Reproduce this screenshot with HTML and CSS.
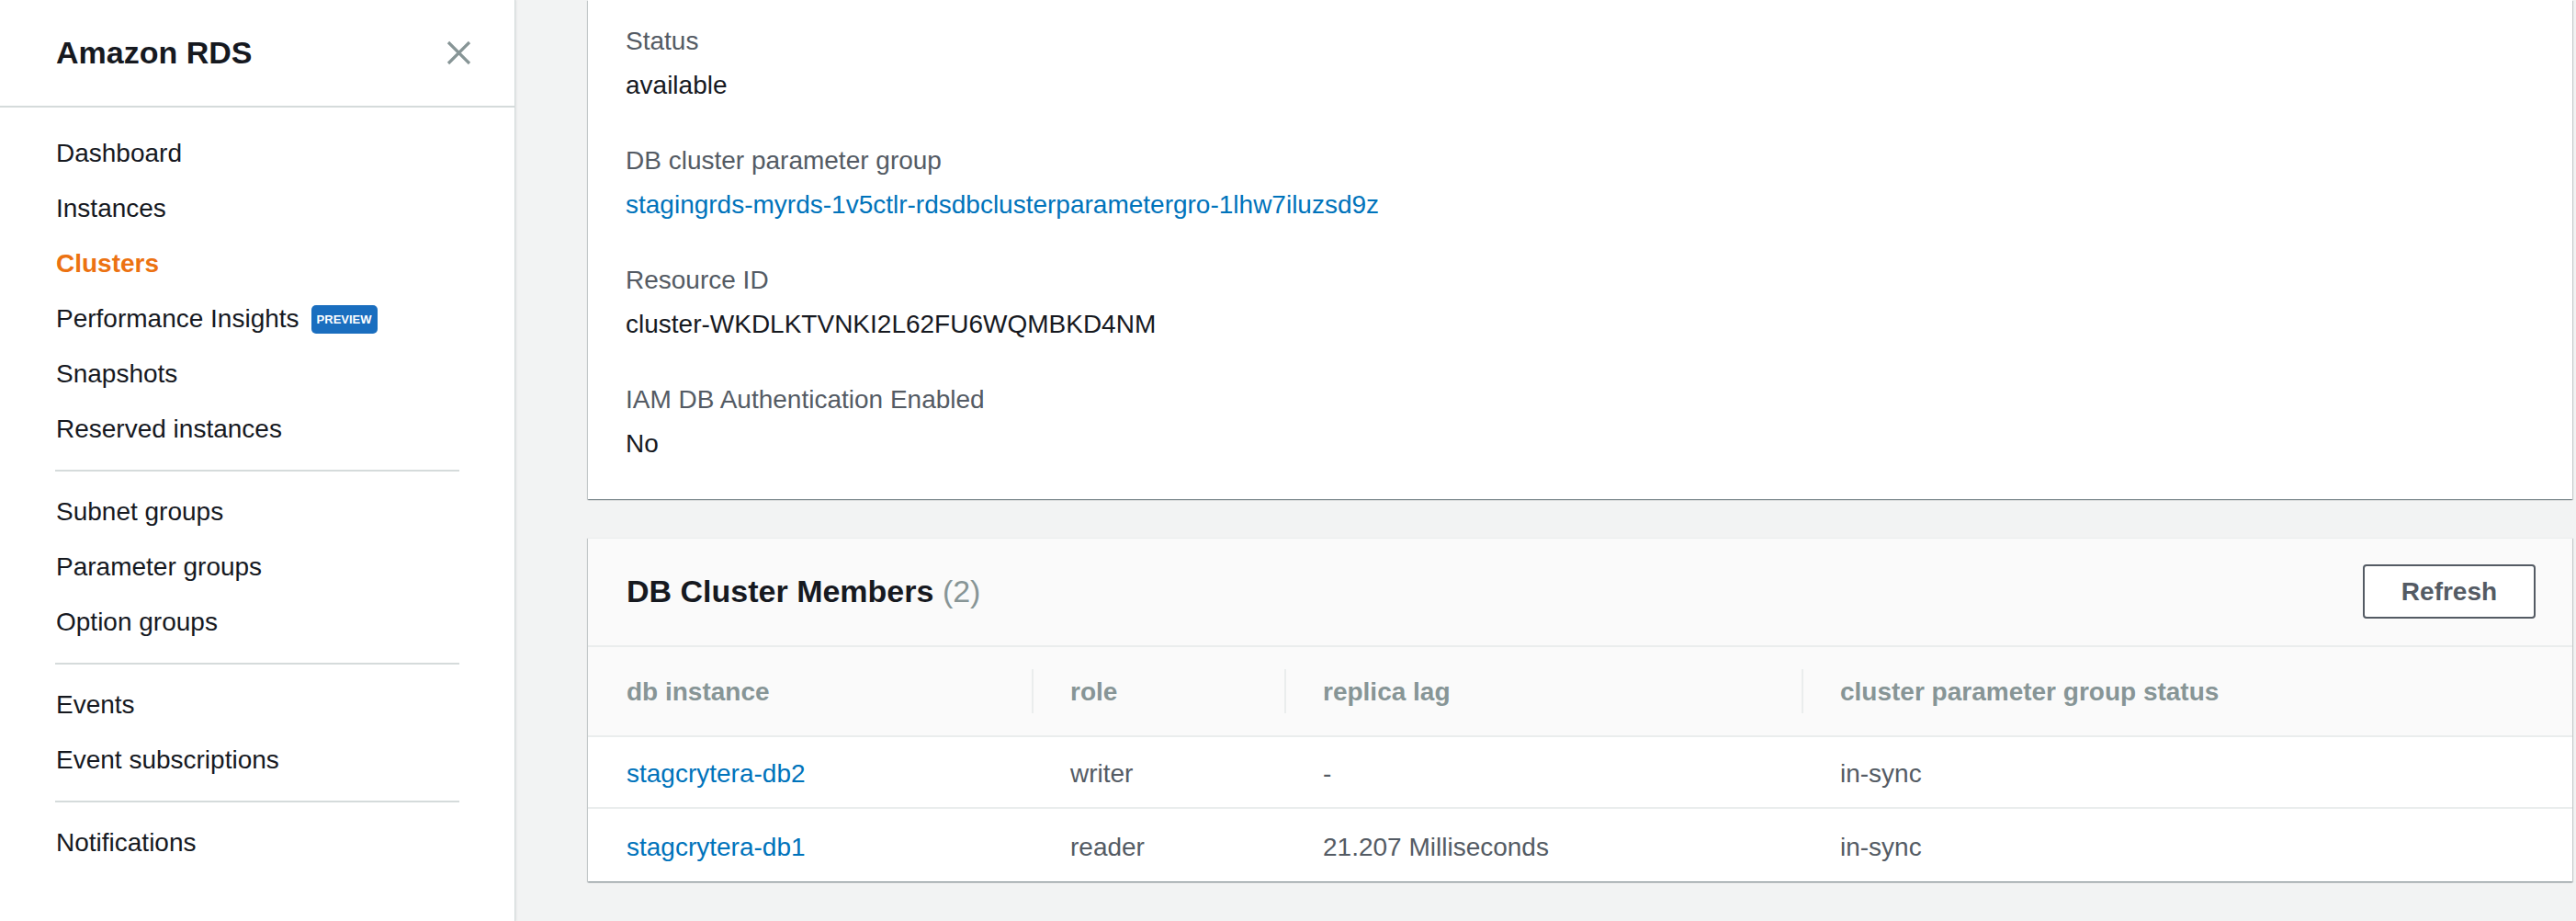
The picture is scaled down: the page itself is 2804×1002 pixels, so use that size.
FILE: index.html
```html
<!DOCTYPE html>
<html lang="en">
<head>
<meta charset="utf-8">
<title>Amazon RDS - Cluster</title>
<link rel="stylesheet" href="styles.css">
</head>
<body>
<aside class="sidebar">
  <div class="side-header">
    <span class="side-title">Amazon RDS</span>
    <svg class="close-icon" width="27" height="27" viewBox="0 0 27 27" aria-hidden="true">
      <path d="M2 2 L25 25 M25 2 L2 25" stroke="#879596" stroke-width="3.2" fill="none"/>
    </svg>
  </div>
  <nav class="side-nav">
    <a class="nav-item">Dashboard</a>
    <a class="nav-item">Instances</a>
    <a class="nav-item active">Clusters</a>
    <a class="nav-item">Performance Insights <span class="badge">PREVIEW</span></a>
    <a class="nav-item">Snapshots</a>
    <a class="nav-item">Reserved instances</a>
    <div class="nav-divider"></div>
    <a class="nav-item">Subnet groups</a>
    <a class="nav-item">Parameter groups</a>
    <a class="nav-item">Option groups</a>
    <div class="nav-divider"></div>
    <a class="nav-item">Events</a>
    <a class="nav-item">Event subscriptions</a>
    <div class="nav-divider"></div>
    <a class="nav-item">Notifications</a>
  </nav>
</aside>
<main class="main">
  <section class="card details">
    <div class="field">
      <div class="label">Status</div>
      <div class="value">available</div>
    </div>
    <div class="field">
      <div class="label">DB cluster parameter group</div>
      <div class="value"><a class="link">stagingrds-myrds-1v5ctlr-rdsdbclusterparametergro-1lhw7iluzsd9z</a></div>
    </div>
    <div class="field">
      <div class="label">Resource ID</div>
      <div class="value">cluster-WKDLKTVNKI2L62FU6WQMBKD4NM</div>
    </div>
    <div class="field">
      <div class="label">IAM DB Authentication Enabled</div>
      <div class="value">No</div>
    </div>
  </section>

  <section class="card members">
    <div class="members-header">
      <h2 class="members-title">DB Cluster Members <span class="count">(2)</span></h2>
      <button class="btn">Refresh</button>
    </div>
    <table class="members-table">
      <colgroup>
        <col class="c1"><col class="c2"><col class="c3"><col>
      </colgroup>
      <thead>
        <tr>
          <th>db instance</th>
          <th class="sep">role</th>
          <th class="sep">replica lag</th>
          <th class="sep">cluster parameter group status</th>
        </tr>
      </thead>
      <tbody>
        <tr>
          <td><a class="link">stagcrytera-db2</a></td>
          <td>writer</td>
          <td>-</td>
          <td>in-sync</td>
        </tr>
        <tr class="last">
          <td><a class="link">stagcrytera-db1</a></td>
          <td>reader</td>
          <td>21.207 Milliseconds</td>
          <td>in-sync</td>
        </tr>
      </tbody>
    </table>
  </section>
</main>
</body>
</html>
```
FILE: styles.css
```css
* { box-sizing: border-box; }

html, body {
  margin: 0;
  height: 1002px;
  overflow: hidden;
}

body {
  display: flex;
  background: #f2f3f3;
  font-family: "Liberation Sans", Arial, sans-serif;
  color: #16191f;
  font-size: 28px;
}

/* Sidebar */
.sidebar {
  width: 561px;
  flex: none;
  background: #ffffff;
  border-right: 1px solid #d5dbdb;
  box-shadow: 1px 0 2px rgba(0, 28, 36, 0.08);
}

.side-header {
  height: 117px;
  border-bottom: 2px solid #d5dbdb;
  display: flex;
  align-items: center;
  justify-content: space-between;
  padding: 0 47px 0 61px;
}

.side-title {
  font-size: 34px;
  font-weight: 700;
  color: #16191f;
}

.close-icon { display: block; }

.side-nav {
  padding-top: 20px;
  display: flex;
  flex-direction: column;
}

.nav-item {
  height: 60px;
  display: flex;
  align-items: center;
  padding-left: 61px;
  font-size: 28px;
  color: #16191f;
  white-space: nowrap;
}

.nav-item.active {
  color: #ec7211;
  font-weight: 700;
}

.badge {
  display: inline-block;
  margin-left: 13px;
  height: 31px;
  line-height: 31px;
  padding: 0 6px;
  border-radius: 5px;
  background: #1a6ebf;
  color: #ffffff;
  font-size: 13px;
  font-weight: 700;
}

.nav-divider {
  height: 2px;
  background: #d5dbdb;
  margin: 14px 60px 14px 60px;
}

/* Main */
.main {
  flex: 1;
  padding: 0 4px 0 79px;
  display: flex;
  flex-direction: column;
}

.card {
  background: #ffffff;
  box-shadow: 0 1px 1px 0 rgba(0, 28, 36, 0.3),
              1px 1px 1px 0 rgba(0, 28, 36, 0.15),
              -1px 1px 1px 0 rgba(0, 28, 36, 0.15);
}

.details {
  padding: 25px 41px 40px 41px;
}

.field + .field { margin-top: 42px; }

.label {
  line-height: 40px;
  color: #545b64;
}

.value {
  margin-top: 8px;
  line-height: 40px;
  color: #16191f;
}

.link {
  color: #0073bb;
  text-decoration: none;
}

.members {
  margin-top: 42px;
  border-top: 1px solid #eaeded;
}

.members-header {
  display: flex;
  align-items: center;
  justify-content: space-between;
  padding: 28px 40px 29px 42px;
  background: #fafafa;
  border-bottom: 2px solid #eaeded;
}

.members-title {
  margin: 0;
  font-size: 34px;
  font-weight: 700;
  color: #16191f;
}

.count {
  font-weight: 400;
  color: #879596;
}

.btn {
  height: 59px;
  width: 188px;
  border: 2px solid #545b64;
  border-radius: 4px;
  background: #ffffff;
  color: #545b64;
  font-family: inherit;
  font-size: 28px;
  font-weight: 700;
  padding: 0;
}

.members-table {
  width: 100%;
  border-collapse: collapse;
  table-layout: fixed;
}

.c1 { width: 483px; }
.c2 { width: 275px; }
.c3 { width: 563px; }

.members-table th {
  height: 97px;
  padding: 2px 0 0 42px;
  text-align: left;
  font-weight: 700;
  color: #879596;
  background-color: #fafafa;
  border-bottom: 2px solid #eaeded;
}

.members-table th.sep {
  background-image: linear-gradient(#eaeded, #eaeded);
  background-repeat: no-repeat;
  background-size: 2px 48px;
  background-position: 0 50%;
}

.members-table td {
  height: 78px;
  padding: 4px 0 0 42px;
  color: #545b64;
  border-bottom: 2px solid #eaeded;
  white-space: nowrap;
}

.members-table tr.last td {
  height: 80px;
  border-bottom: none;
}
```
